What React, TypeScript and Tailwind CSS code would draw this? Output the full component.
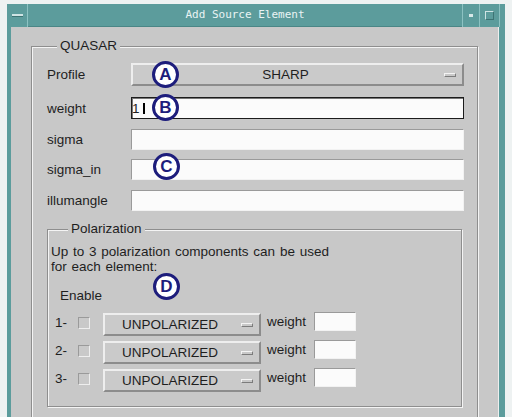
import type { ReactNode } from "react";

const raised = "border-t-2 border-l-2 border-b-2 border-r-2 border-t-[#eeeeee] border-l-[#eeeeee] border-b-[#8c8c8c] border-r-[#8c8c8c]";
const sunken = "border border-t-[#9a9a9a] border-l-[#9a9a9a] border-b-[#f2f2f2] border-r-[#f2f2f2] bg-[#fbfbfb]";

function Group({ title, titleLeft, className, children }: { title: string; titleLeft: string; className: string; children: ReactNode }) {
  return (
    <div className={`relative border border-[#8e8e8e] shadow-[inset_1px_1px_0_#f4f4f4,1px_1px_0_#f4f4f4] ${className}`}>
      <span className={`absolute -top-[9px] ${titleLeft} bg-[#c8c8c8] px-[3px] leading-[16px]`}>{title}</span>
      {children}
    </div>
  );
}

function Indicator() {
  return (
    <div className="w-[24px] flex justify-center">
      <div className="w-[12px] h-[4px] border-t border-l border-t-[#f4f4f4] border-l-[#f4f4f4] border-b border-r border-b-[#7c7c7c] border-r-[#7c7c7c] bg-[#c8c8c8]" />
    </div>
  );
}

function OptionMenu({ value, className }: { value: string; className: string }) {
  return (
    <div className={`flex items-center bg-[#cacaca] ${raised} ${className}`}>
      <span className="flex-1 text-center leading-[15px]">{value}</span>
      <Indicator />
    </div>
  );
}

function Field({ label, mt, h, children }: { label: string; mt: string; h: string; children?: ReactNode }) {
  return (
    <div className={`flex items-center ${mt}`}>
      <span className="w-[84px] leading-[15px]">{label}</span>
      {children ?? <div className={`flex-1 ${h} ${sunken}`} />}
    </div>
  );
}

function Callout({ letter, className }: { letter: string; className: string }) {
  return (
    <div className={`absolute w-[27px] h-[27px] rounded-full border-[3px] border-[#1d1d7c] bg-white flex items-center justify-center text-[#1d1d7c] font-bold text-[17px] leading-none ${className}`}>
      {letter}
    </div>
  );
}

function PolRow({ n, mt }: { n: string; mt: string }) {
  return (
    <div className={`flex items-start ${mt}`}>
      <span className="w-[27px] pl-[4px] mt-[2px] leading-[15px]">{n}</span>
      <div className="w-[12px] h-[12px] mt-[4px] bg-[#c9c9c9] border border-t-[#9a9a9a] border-l-[#9a9a9a] border-b-[#eeeeee] border-r-[#eeeeee]" />
      <OptionMenu value="UNPOLARIZED" className="ml-[13px] w-[158px] h-[23px]" />
      <span className="ml-[6px] mt-[1px] leading-[15px]">weight</span>
      <div className={`ml-[8px] -mt-[1px] w-[42px] h-[19px] ${sunken}`} />
    </div>
  );
}

export default function App() {
  return (
    <div className="relative w-[512px] h-[417px] overflow-hidden bg-[#eef2f2] pl-[7px] pt-[4px] font-['Liberation_Sans',Arial,sans-serif] text-[13.5px] text-[#1e1e1e]">
      <div className="w-[498px] h-[440px] flex flex-col bg-[#5c9c9c]">
        {/* title bar */}
        <div className="h-[23px] shrink-0 flex">
          <div className="w-[21px] flex items-center justify-center border-r border-[#8cc2c2]">
            <div className="w-[11px] h-[3px] bg-[#cfe4e4] border-b border-[#3d7474]" />
          </div>
          <div className="flex-1 flex items-center justify-center font-['DejaVu_Sans_Mono',monospace] text-[11px] text-[#eaf4f4] border-b border-[#4a8686]">
            Add Source Element
          </div>
          <div className="w-[18px] flex items-center justify-center border-l border-r border-[#8cc2c2]">
            <div className="w-[4px] h-[3px] bg-[#d7e8e8]" />
          </div>
          <div className="w-[20px] flex items-center justify-center border-r border-[#8cc2c2]">
            <div className="w-[9px] h-[9px] border border-t-[#cfe4e4] border-l-[#cfe4e4] border-b-[#3d7474] border-r-[#3d7474]" />
          </div>
          <div className="w-[5px]" />
        </div>

        {/* body */}
        <div className="flex-1 min-h-0 flex">
          <div className="w-[4px]" />
          <div className="flex-1 bg-[#c8c8c8] px-[20px] pt-[19px] border-r border-[#eeeeee]">
            <Group title="QUASAR" titleLeft="left-[25px]" className="h-[420px] pl-[15px] pr-[13px] pt-[16px]">
              <Field label="Profile" mt="mt-0" h="h-[23px]">
                <OptionMenu value="SHARP" className="flex-1 h-[23px]" />
              </Field>
              <Field label="weight" mt="mt-[11px]" h="h-[22px]">
                <div className="flex-1 h-[22px] bg-[#fbfbfb] border border-[#1c1c1c] shadow-[inset_1px_1px_0_#777] flex items-center">
                  <span className="leading-[15px]">1</span>
                  <span className="ml-[3px] w-[2px] h-[11px] bg-black" />
                </div>
              </Field>
              <Field label="sigma" mt="mt-[10px]" h="h-[21px]" />
              <Field label="sigma_in" mt="mt-[9px]" h="h-[21px]" />
              <Field label="illumangle" mt="mt-[10px]" h="h-[21px]" />

              <Group title="Polarization" titleLeft="left-[20px]" className="mt-[18px] mr-[2px] pl-[3px] pt-[14px] pb-[14px]">
                <div className="leading-[15px] [word-spacing:1px]">
                  Up to 3 polarization components can be used
                  <br />
                  for each element:
                </div>
                <div className="mt-[14px] ml-[9px] leading-[15px]">Enable</div>
                <PolRow n="1-" mt="mt-[10px]" />
                <PolRow n="2-" mt="mt-[5px]" />
                <PolRow n="3-" mt="mt-[5px]" />
              </Group>
            </Group>
          </div>
          <div className="w-[6px]" />
        </div>
      </div>

      <Callout letter="A" className="left-[152px] top-[61px]" />
      <Callout letter="B" className="left-[152px] top-[94px]" />
      <Callout letter="C" className="left-[153px] top-[153px]" />
      <Callout letter="D" className="left-[153px] top-[273px]" />
    </div>
  );
}
